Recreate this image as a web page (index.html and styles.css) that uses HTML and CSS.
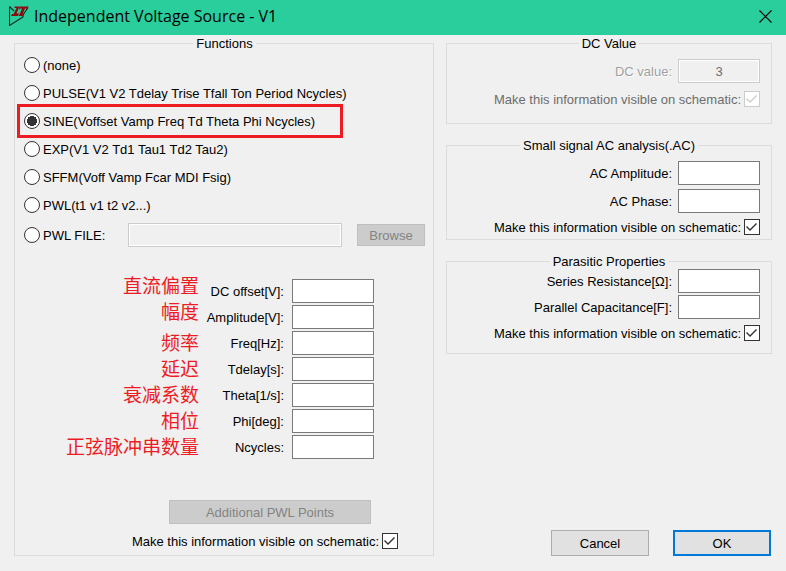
FILE: index.html
```html
<!DOCTYPE html>
<html lang="en">
<head>
<meta charset="utf-8">
<meta name="viewport" content="width=device-width, initial-scale=1">
<title>Independent Voltage Source - V1</title>
<link rel="stylesheet" href="styles.css">
</head>
<body>
<header class="titlebar">
  <svg class="app-icon" viewBox="0 0 20 20" aria-hidden="true">
    <path d="M0.5 0.5V19.5L14 11V9L19 1.5M0.5 0.5L5 5" fill="none" stroke="#10241d" stroke-width="1.1"/>
    <path d="M5.5 0.5H10.5L7.5 7.5H9.5L10.5 6L9 10H2L3 8H4.5L7.5 2H5.5Z" fill="#8a0a10"/>
    <path d="M10.5 0.5H19.5L18 4L17 2.5H16L13.5 8.5H14.5L14 10H9.5L10.5 8.5L13 2.5H11.5L10 4Z" fill="#8a0a10"/>
  </svg>
  <h1 class="title">Independent Voltage Source - V1</h1>
  <button class="close" type="button" aria-label="Close">
    <svg class="close-icon" viewBox="0 0 13 13" aria-hidden="true"><path d="M0.5 0.5L12.5 12.5M12.5 0.5L0.5 12.5" fill="none" stroke="#000" stroke-width="1.1"/></svg>
  </button>
</header>
<form class="dialog">
  <fieldset class="group functions">
    <legend>Functions</legend>
    <div class="option"><input type="radio" name="fn" id="fn-none"><label for="fn-none">(none)</label></div>
    <div class="option"><input type="radio" name="fn" id="fn-pulse"><label for="fn-pulse">PULSE(V1 V2 Tdelay Trise Tfall Ton Period Ncycles)</label></div>
    <div class="option marked"><input type="radio" name="fn" id="fn-sine" checked><label for="fn-sine">SINE(Voffset Vamp Freq Td Theta Phi Ncycles)</label></div>
    <div class="option"><input type="radio" name="fn" id="fn-exp"><label for="fn-exp">EXP(V1 V2 Td1 Tau1 Td2 Tau2)</label></div>
    <div class="option"><input type="radio" name="fn" id="fn-sffm"><label for="fn-sffm">SFFM(Voff Vamp Fcar MDI Fsig)</label></div>
    <div class="option"><input type="radio" name="fn" id="fn-pwl"><label for="fn-pwl">PWL(t1 v1 t2 v2...)</label></div>
    <div class="file-row">
      <div class="option"><input type="radio" name="fn" id="fn-file"><label for="fn-file">PWL FILE:</label></div>
      <input class="field file" type="text" aria-label="PWL file path" disabled>
      <button class="btn browse" type="button" disabled>Browse</button>
    </div>
    <div class="params">
      <div class="notes" lang="zh-CN">
        <div class="note-group"><span>直流偏置</span><span>幅度</span></div>
        <div class="note-group"><span>频率</span><span>延迟</span><span>衰减系数</span><span>相位</span><span>正弦脉冲串数量</span></div>
      </div>
      <div class="param-list">
        <div class="row"><label for="p-offset">DC offset[V]:</label><input class="field" type="text" id="p-offset"></div>
        <div class="row"><label for="p-amp">Amplitude[V]:</label><input class="field" type="text" id="p-amp"></div>
        <div class="row"><label for="p-freq">Freq[Hz]:</label><input class="field" type="text" id="p-freq"></div>
        <div class="row"><label for="p-delay">Tdelay[s]:</label><input class="field" type="text" id="p-delay"></div>
        <div class="row"><label for="p-theta">Theta[1/s]:</label><input class="field" type="text" id="p-theta"></div>
        <div class="row"><label for="p-phi">Phi[deg]:</label><input class="field" type="text" id="p-phi"></div>
        <div class="row"><label for="p-n">Ncycles:</label><input class="field" type="text" id="p-n"></div>
      </div>
    </div>
    <button class="btn points" type="button" disabled>Additional PWL Points</button>
    <div class="check-row"><label for="vis-fn">Make this information visible on schematic:</label><input type="checkbox" id="vis-fn" checked></div>
  </fieldset>

  <div class="side">
    <fieldset class="group dc">
      <legend>DC Value</legend>
      <div class="row etched"><label for="dc">DC value:</label><input class="field" type="text" id="dc" value="3" disabled></div>
      <div class="check-row muted"><label for="vis-dc">Make this information visible on schematic:</label><input type="checkbox" id="vis-dc" checked disabled></div>
    </fieldset>
    <fieldset class="group ac">
      <legend>Small signal AC analysis(.AC)</legend>
      <div class="row"><label for="ac-amp">AC Amplitude:</label><input class="field" type="text" id="ac-amp"></div>
      <div class="row"><label for="ac-phase">AC Phase:</label><input class="field" type="text" id="ac-phase"></div>
      <div class="check-row"><label for="vis-ac">Make this information visible on schematic:</label><input type="checkbox" id="vis-ac" checked></div>
    </fieldset>
    <fieldset class="group parasitic">
      <legend>Parasitic Properties</legend>
      <div class="row"><label for="rser">Series Resistance[Ω]:</label><input class="field" type="text" id="rser"></div>
      <div class="row"><label for="cpar">Parallel Capacitance[F]:</label><input class="field" type="text" id="cpar"></div>
      <div class="check-row"><label for="vis-par">Make this information visible on schematic:</label><input type="checkbox" id="vis-par" checked></div>
    </fieldset>
    <div class="actions">
      <button class="btn" type="button">Cancel</button>
      <button class="btn primary" type="button">OK</button>
    </div>
  </div>
</form>
</body>
</html>
```
FILE: styles.css
```css
*,
*::before,
*::after {
  box-sizing: border-box;
}

body {
  margin: 0;
  background: #f0f0f0;
  color: #000;
  font: 13px/16px "Liberation Sans", Arial, sans-serif;
}

.titlebar {
  display: flex;
  align-items: center;
  height: 35px;
  padding: 0 14px 3px 9px;
  background: #29ce9c;
}

.app-icon {
  width: 20px;
  height: 20px;
  margin-right: 5px;
}

.title {
  flex: 1;
  margin: 0;
  font: 400 16px/20px "Open Sans", "Noto Sans", sans-serif;
}

.close {
  display: flex;
  padding: 0;
  border: 0;
  background: none;
}

.close-icon {
  width: 13px;
  height: 13px;
}

.dialog {
  display: grid;
  grid-template-columns: 420fr 326fr;
  gap: 12px;
  padding: 1px 14px 15px;
}

.group {
  min-width: 0;
  margin: 0;
  padding: 0 11px;
  border: 1px solid #dcdcdc;
}

.group legend {
  margin: 0 auto;
  padding: 0 3px;
  line-height: 15px;
}

label {
  padding-top: 2px;
  line-height: 14px;
}

.functions {
  padding: 0 8px 6px 9px;
}

.option {
  position: relative;
  display: flex;
  align-items: center;
  gap: 3px;
  height: 28px;
}

.marked::after {
  content: "";
  position: absolute;
  top: -3px;
  left: -7px;
  width: 326px;
  height: 34px;
  border: 3px solid #ed1c24;
  pointer-events: none;
}

input[type="radio"],
input[type="checkbox"] {
  appearance: none;
  flex: none;
  width: 16px;
  height: 16px;
  margin: 0;
  border: 1px solid #333;
  background: #fff;
}

input[type="radio"] {
  border-radius: 50%;
}

input[type="radio"]:checked {
  background: radial-gradient(circle, #333 5px, #fff 5px);
}

input[type="checkbox"]::before {
  content: "";
  display: block;
  width: 14px;
  height: 14px;
  background: #333;
  clip-path: polygon(1px 7px, 2px 6px, 5px 9px, 11px 3px, 12px 4px, 5px 11px);
}

input[type="checkbox"]:disabled {
  border-color: #ccc;
}

input[type="checkbox"]:disabled::before {
  background: #ccc;
}

.field {
  width: 82px;
  height: 24px;
  padding: 0 4px;
  border: 1px solid #7a7a7a;
  background: #fff;
  color: #000;
  font: inherit;
  text-align: center;
}

.field:disabled {
  border-color: #ccc;
  background: #f0f0f0;
  box-shadow: inset 0 0 0 1px #fff;
  color: #6d6d6d;
}

.file-row {
  display: grid;
  grid-template-columns: 104px 1fr 68px;
  align-items: center;
  height: 32px;
}

.file {
  width: auto;
  margin-right: 15px;
}

.btn {
  height: 26px;
  padding: 2px 0 0;
  border: 1px solid #adadad;
  background: #e1e1e1;
  color: #000;
  font: inherit;
}

.btn:disabled {
  border-color: #bfbfbf;
  background: #ccc;
  color: #838383;
}

.browse {
  height: 22px;
}

.params {
  display: flex;
  justify-content: flex-end;
  align-items: flex-end;
  margin-top: 21px;
  padding-right: 51px;
}

.notes {
  display: flex;
  flex-direction: column;
  gap: 5px;
  padding-bottom: 1px;
  color: #ed1c24;
  font: 19px/26px "Noto Sans CJK SC", sans-serif;
}

.note-group {
  display: flex;
  flex-direction: column;
  align-items: flex-end;
}

.param-list {
  display: grid;
  gap: 2px;
  min-width: 175px;
  padding-bottom: 1px;
}

.row {
  display: flex;
  justify-content: flex-end;
  align-items: center;
  gap: 6px;
}

.param-list .row {
  gap: 8px;
}

.points {
  display: block;
  width: 202px;
  height: 24px;
  margin: 40px 54px 9px auto;
}

.check-row {
  display: flex;
  justify-content: flex-end;
  align-items: center;
  gap: 3px;
}

.functions .check-row {
  padding-right: 27px;
}

.side {
  display: flex;
  flex-direction: column;
  gap: 14px;
}

.dc {
  padding-top: 8px;
  padding-bottom: 16px;
}

.dc .check-row {
  margin-top: 8px;
}

.ac {
  padding-top: 8px;
  padding-bottom: 4px;
}

.ac .row + .row {
  margin-top: 4px;
}

.ac .check-row,
.parasitic .check-row {
  margin-top: 6px;
}

.parasitic {
  padding-bottom: 12px;
}

.parasitic .row + .row {
  margin-top: 2px;
}

.etched label {
  color: #a0a0a0;
  text-shadow: 1px 1px #fff;
}

.muted label {
  color: #6d6d6d;
}

.actions {
  display: flex;
  justify-content: flex-end;
  gap: 24px;
  margin-top: auto;
  padding-right: 1px;
}

.actions .btn {
  width: 98px;
}

.primary {
  border: 2px solid #0078d7;
}
```
